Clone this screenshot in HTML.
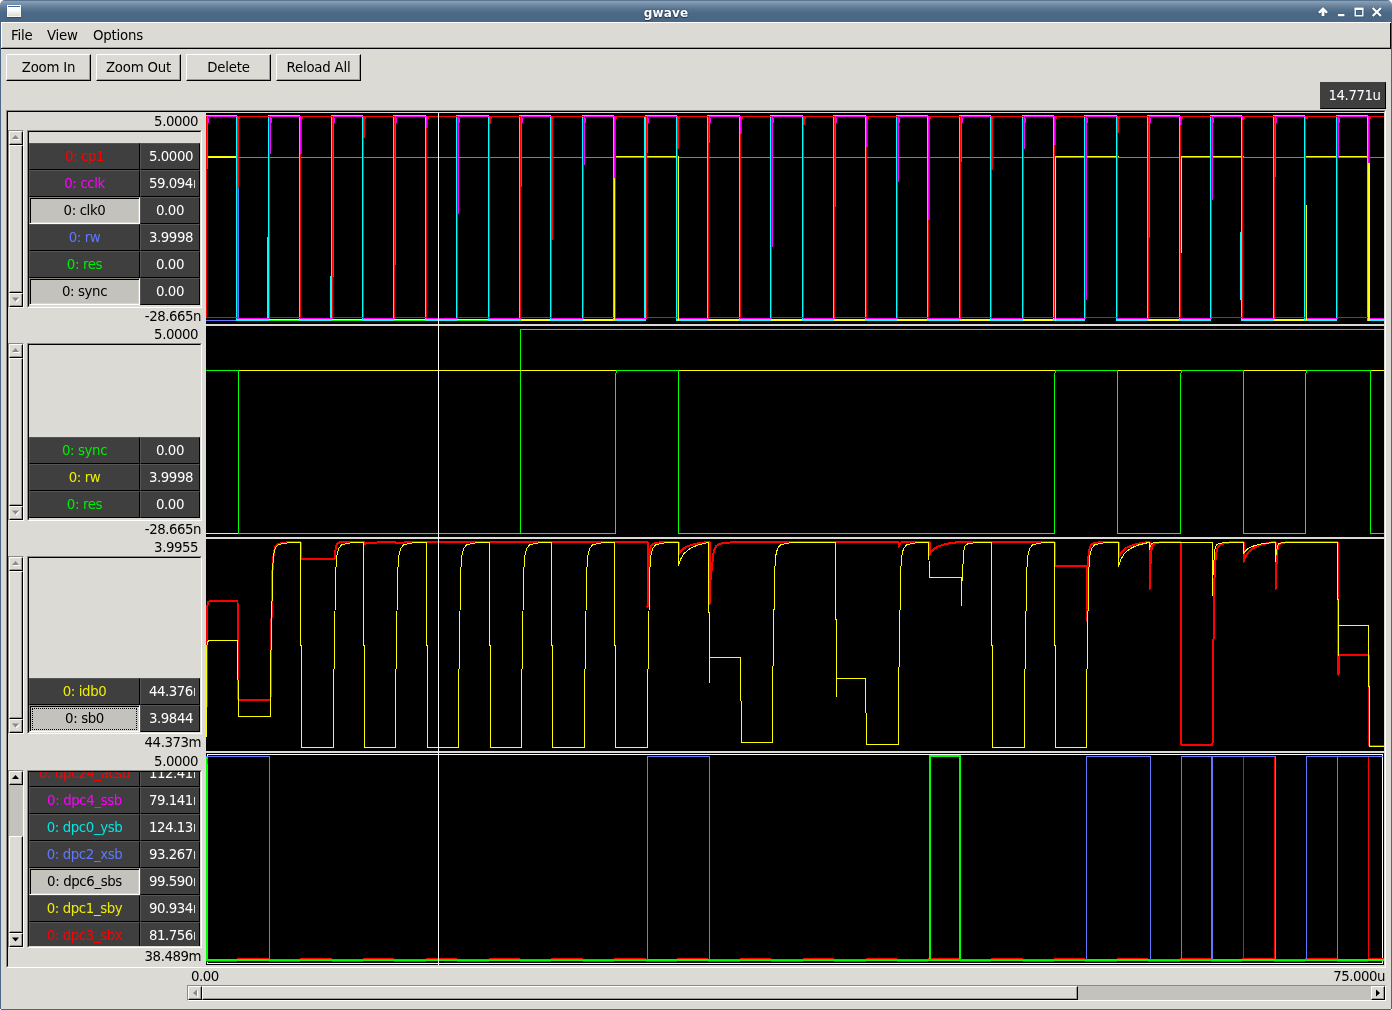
<!DOCTYPE html><html><head><meta charset="utf-8"><title>gwave</title><style>
*{box-sizing:border-box;margin:0;padding:0}
html,body{width:1392px;height:1010px;overflow:hidden;background:#dcdad5}
body{position:relative;font-family:"DejaVu Sans","Liberation Sans",sans-serif;font-size:13.33px;letter-spacing:-0.22px;color:#000}
.a{position:absolute}
.t{position:absolute;white-space:nowrap;line-height:16px;height:16px}
#root{position:absolute;left:0;top:0;width:1392px;height:1010px;will-change:transform}
#tb{left:0;top:0;width:1392px;height:22px;background:linear-gradient(#587592 0px,#587592 1px,#8ba1b7 1px,#7189a3 5px,#58758f 9px,#4b6987 13px,#4a6886 22px);border-radius:5px 5px 0 0}
#title{left:0;width:1332px;top:5px;text-align:center;color:#fff;font-weight:bold;font-size:12px;letter-spacing:0.15px;line-height:16px;height:16px;text-shadow:0 1px 1px rgba(20,35,55,.7),0 0 2px rgba(20,35,55,.6)}
.btn{position:absolute;background:#dcdad5;border:1px solid;border-color:#fff #000 #000 #fff;box-shadow:inset -1px -1px 0 #9b9a96;text-align:center;line-height:26px}
.db{position:absolute;background:#3f3f3f;height:27px;border:1px solid;border-color:#555 #000 #000 #555;text-align:center;line-height:26px;color:#fff;white-space:nowrap;overflow:hidden;letter-spacing:-0.38px}
.sel{background:#c4c2bd;color:#000;border-color:#8b8a80 #fff #fff #8b8a80;box-shadow:inset 1px 1px 0 #000,inset -1px -1px 0 #d6d4cf}
.lb{position:absolute;border:1px solid;border-color:#8b8a86 #fff #fff #8b8a86;overflow:hidden}
.lb i{pointer-events:none;position:absolute;left:0;top:0;right:0;bottom:0;border:1px solid;border-color:#000 #dcdad5 #dcdad5 #000}
.sb{position:absolute;background:#c4c2bd;border:1px solid;border-color:#8b8a86 #fff #fff #8b8a86}
.st{position:absolute;background:#dcdad5;border:1px solid;border-color:#fff #000 #000 #fff;box-shadow:inset -1px -1px 0 #9b9a96}
.vc,.val,.num{letter-spacing:-0.46px}
.vc{position:absolute;left:7px;top:0;width:46px;height:25px;overflow:hidden}
.val{position:absolute;text-align:right;white-space:nowrap;line-height:16px;height:16px}
</style></head><body><div id="root">
<div class="a" style="left:0;top:0;width:1392px;height:1010px;background:#4a6886"></div>
<div class="a" style="left:0;top:0;width:6px;height:6px;background:#fff"></div>
<div class="a" style="right:0;top:0;width:6px;height:6px;background:#fff"></div>
<div class="a" id="tb"></div>
<div class="a" style="left:1px;top:22px;width:1390px;height:987px;background:#dcdad5"></div>
<div class="a" style="left:1px;top:22px;width:1390px;height:1px;background:#fff"></div>
<div class="a" style="left:1px;top:22px;width:1px;height:26px;background:#fff"></div>
<div class="a" style="left:1391px;top:1009px;width:1px;height:1px;background:#fff"></div>
<div class="a" style="left:0;top:1009px;width:1px;height:1px;background:#fff"></div>
<div class="a" style="left:7px;top:5px;width:14px;height:12px;background:linear-gradient(#4468ae 0,#4468ae 1px,#fff 1px,#fdfdfb 4px,#deded6 10px);border:1px solid #f6f6f2;border-top-color:#fff;box-shadow:0 1px 1px rgba(40,60,90,.6)"></div>
<div class="a t" id="title">gwave</div>
<svg class="a" style="left:1310px;top:0" width="80" height="22" viewBox="1310 0 80 22"><g fill="none" stroke="#3c5772" transform="translate(0,0.3)" style="stroke-width:1" opacity="0.9"><path d="M1323 10V16" stroke-width="4.4" stroke-linecap="butt"/><path d="M1319.6 12.1L1323 8.7l3.4 3.4" stroke-width="4" stroke-linecap="round" stroke-linejoin="miter"/><path d="M1338 15.1h6.4" stroke-width="3.9"/><path d="M1355.2 9.2h7.6v6.6h-7.6z" stroke-width="3"/><path d="M1354.5 8.5h9" stroke-width="3.6"/><path d="M1372.7 7.9l8.2 8.2M1380.9 7.9l-8.2 8.2" stroke-width="3.7" stroke-linecap="butt"/></g><g fill="none" stroke="#fff"><path d="M1323 10V16" stroke-width="2.8" stroke-linecap="butt"/><path d="M1319.6 12.1L1323 8.7l3.4 3.4" stroke-width="2.4" stroke-linecap="round" stroke-linejoin="miter"/><path d="M1338 15.1h6.4" stroke-width="2.3"/><path d="M1355.2 9.2h7.6v6.6h-7.6z" stroke-width="1.4"/><path d="M1354.5 8.5h9" stroke-width="2"/><path d="M1372.7 7.9l8.2 8.2M1380.9 7.9l-8.2 8.2" stroke-width="2.1" stroke-linecap="butt"/></g></svg>
<div class="a" style="left:2px;top:47px;width:1388px;height:1px;background:#9b9a96"></div>
<div class="a" style="left:1px;top:48px;width:1390px;height:1px;background:#000"></div>
<div class="a" style="left:1390px;top:23px;width:1px;height:26px;background:#000"></div>
<div class="t" style="left:11px;top:28px">File</div>
<div class="t" style="left:47px;top:28px">View</div>
<div class="t" style="left:93px;top:28px">Options</div>
<div class="btn" style="left:6px;top:54px;width:85px;height:27px">Zoom In</div>
<div class="btn" style="left:96px;top:54px;width:85px;height:27px">Zoom Out</div>
<div class="btn" style="left:186px;top:54px;width:85px;height:27px">Delete</div>
<div class="btn" style="left:276px;top:54px;width:85px;height:27px">Reload All</div>
<div class="a" style="left:1320px;top:82px;width:66px;height:27px;padding-left:3px;background:#3f3f3f;border:1px solid;border-color:#3f3f3f #000 #000 #3f3f3f;color:#fff;text-align:center;line-height:25px;letter-spacing:-0.46px">14.771u</div>
<div class="a" style="left:6px;top:110px;width:1380px;height:858px;border:1px solid;border-color:#8b8a86 #fff #fff #8b8a86"></div>
<div class="a" style="left:7px;top:111px;width:1378px;height:856px;border:1px solid;border-color:#000 #dcdad5 #dcdad5 #000"></div>
<div class="val" style="left:100px;width:98px;top:114px">5.0000</div>
<div class="val" style="left:100px;width:101px;top:309px">-28.665n</div>
<div class="sb" style="left:8px;top:130px;width:16px;height:178px"></div>
<div class="st" style="left:9px;top:131px;width:14px;height:14px"></div>
<div class="st" style="left:9px;top:293px;width:14px;height:14px"></div>
<svg class="a" style="left:9px;top:131px" width="14" height="14"><path d="M4 9h7L7.5 5z" fill="#fff"/><path d="M3 8h7L6.5 4z" fill="#8b8a86"/></svg>
<svg class="a" style="left:9px;top:293px" width="14" height="14"><path d="M4 5.5h7L7.5 9.5z" fill="#fff"/><path d="M3 4.5h7L6.5 8.5z" fill="#8b8a86"/></svg>
<div class="st" style="left:9px;top:145px;width:14px;height:148px"></div>
<div class="lb" style="left:27px;top:130px;width:175px;height:178px">
<div class="db" style="left:1px;top:12px;width:111px;color:#ff0000">0: cp1</div>
<div class="db" style="left:112px;top:12px;width:60px"><span class="vc" style="text-align:center">5.0000</span></div>
<div class="db" style="left:1px;top:39px;width:111px;color:#ff00ff">0: cclk</div>
<div class="db" style="left:112px;top:39px;width:60px"><span class="vc" style="text-align:left;left:8px">59.094m</span></div>
<div class="db sel" style="left:1px;top:66px;width:111px">0: clk0</div>
<div class="db" style="left:112px;top:66px;width:60px"><span class="vc" style="text-align:center;left:6px">0.00</span></div>
<div class="db" style="left:1px;top:93px;width:111px;color:#5f78ff">0: rw</div>
<div class="db" style="left:112px;top:93px;width:60px"><span class="vc" style="text-align:center">3.9998</span></div>
<div class="db" style="left:1px;top:120px;width:111px;color:#00ee00">0: res</div>
<div class="db" style="left:112px;top:120px;width:60px"><span class="vc" style="text-align:center;left:6px">0.00</span></div>
<div class="db sel" style="left:1px;top:147px;width:111px">0: sync</div>
<div class="db" style="left:112px;top:147px;width:60px"><span class="vc" style="text-align:center;left:6px">0.00</span></div>
<i></i></div>
<div class="val" style="left:100px;width:98px;top:327px">5.0000</div>
<div class="val" style="left:100px;width:101px;top:522px">-28.665n</div>
<div class="sb" style="left:8px;top:343px;width:16px;height:178px"></div>
<div class="st" style="left:9px;top:344px;width:14px;height:14px"></div>
<div class="st" style="left:9px;top:506px;width:14px;height:14px"></div>
<svg class="a" style="left:9px;top:344px" width="14" height="14"><path d="M4 9h7L7.5 5z" fill="#fff"/><path d="M3 8h7L6.5 4z" fill="#8b8a86"/></svg>
<svg class="a" style="left:9px;top:506px" width="14" height="14"><path d="M4 5.5h7L7.5 9.5z" fill="#fff"/><path d="M3 4.5h7L6.5 8.5z" fill="#8b8a86"/></svg>
<div class="st" style="left:9px;top:358px;width:14px;height:148px"></div>
<div class="lb" style="left:27px;top:343px;width:175px;height:178px">
<div class="db" style="left:1px;top:93px;width:111px;color:#00ee00">0: sync</div>
<div class="db" style="left:112px;top:93px;width:60px"><span class="vc" style="text-align:center;left:6px">0.00</span></div>
<div class="db" style="left:1px;top:120px;width:111px;color:#eeee00">0: rw</div>
<div class="db" style="left:112px;top:120px;width:60px"><span class="vc" style="text-align:center">3.9998</span></div>
<div class="db" style="left:1px;top:147px;width:111px;color:#00ee00">0: res</div>
<div class="db" style="left:112px;top:147px;width:60px"><span class="vc" style="text-align:center;left:6px">0.00</span></div>
<i></i></div>
<div class="val" style="left:100px;width:98px;top:540px">3.9955</div>
<div class="val" style="left:100px;width:101px;top:735px">44.373m</div>
<div class="sb" style="left:8px;top:556px;width:16px;height:178px"></div>
<div class="st" style="left:9px;top:557px;width:14px;height:14px"></div>
<div class="st" style="left:9px;top:719px;width:14px;height:14px"></div>
<svg class="a" style="left:9px;top:557px" width="14" height="14"><path d="M4 9h7L7.5 5z" fill="#fff"/><path d="M3 8h7L6.5 4z" fill="#8b8a86"/></svg>
<svg class="a" style="left:9px;top:719px" width="14" height="14"><path d="M4 5.5h7L7.5 9.5z" fill="#fff"/><path d="M3 4.5h7L6.5 8.5z" fill="#8b8a86"/></svg>
<div class="st" style="left:9px;top:571px;width:14px;height:148px"></div>
<div class="lb" style="left:27px;top:556px;width:175px;height:178px">
<div class="db" style="left:1px;top:121px;width:111px;color:#eeee00">0: idb0</div>
<div class="db" style="left:112px;top:121px;width:60px"><span class="vc" style="text-align:left;left:8px">44.376m</span></div>
<div class="db sel" style="left:1px;top:148px;width:111px">0: sb0</div>
<div class="a" style="left:4px;top:151px;width:105px;height:22px;border:1px dotted #000"></div>
<div class="db" style="left:112px;top:148px;width:60px"><span class="vc" style="text-align:center">3.9844</span></div>
<i></i></div>
<div class="val" style="left:100px;width:98px;top:754px">5.0000</div>
<div class="val" style="left:100px;width:101px;top:949px">38.489m</div>
<div class="sb" style="left:8px;top:770px;width:16px;height:178px"></div>
<div class="st" style="left:9px;top:771px;width:14px;height:14px"></div>
<div class="st" style="left:9px;top:933px;width:14px;height:14px"></div>
<svg class="a" style="left:9px;top:771px" width="14" height="14"><path d="M3 8h7L6.5 4z" fill="#000"/></svg>
<svg class="a" style="left:9px;top:933px" width="14" height="14"><path d="M3 4.5h7L6.5 8.5z" fill="#000"/></svg>
<div class="st" style="left:9px;top:836px;width:14px;height:97px"></div>
<div class="lb" style="left:27px;top:770px;width:175px;height:178px">
<div class="db" style="left:1px;top:-11px;width:111px;color:#ff0000">0: dpc24_acsb</div>
<div class="db" style="left:112px;top:-11px;width:60px"><span class="vc" style="text-align:left;left:8px">112.41m</span></div>
<div class="db" style="left:1px;top:16px;width:111px;color:#ff00ff">0: dpc4_ssb</div>
<div class="db" style="left:112px;top:16px;width:60px"><span class="vc" style="text-align:left;left:8px">79.141m</span></div>
<div class="db" style="left:1px;top:43px;width:111px;color:#00e5e5">0: dpc0_ysb</div>
<div class="db" style="left:112px;top:43px;width:60px"><span class="vc" style="text-align:left;left:8px">124.13m</span></div>
<div class="db" style="left:1px;top:70px;width:111px;color:#5f78ff">0: dpc2_xsb</div>
<div class="db" style="left:112px;top:70px;width:60px"><span class="vc" style="text-align:left;left:8px">93.267m</span></div>
<div class="db sel" style="left:1px;top:97px;width:111px">0: dpc6_sbs</div>
<div class="db" style="left:112px;top:97px;width:60px"><span class="vc" style="text-align:left;left:8px">99.590m</span></div>
<div class="db" style="left:1px;top:124px;width:111px;color:#eeee00">0: dpc1_sby</div>
<div class="db" style="left:112px;top:124px;width:60px"><span class="vc" style="text-align:left;left:8px">90.934m</span></div>
<div class="db" style="left:1px;top:151px;width:111px;color:#ff0000">0: dpc3_sbx</div>
<div class="db" style="left:112px;top:151px;width:60px"><span class="vc" style="text-align:left;left:8px">81.756m</span></div>
<i></i></div>
<svg class="a" style="left:206px;top:113px" width="1178" height="852" viewBox="206 113 1178 852" shape-rendering="crispEdges">
<path fill="#000" d="M206 113h1178v211h-1178zM206 326h1178v211h-1178zM206 539h1178v212h-1178zM206 753h1178v212h-1178z"/>
<path fill="#ffff00" d="M206 156h33v2h-33zM238 319h376v2h-376zM614 156h65v2h-65zM678 319h376v2h-376zM1054 156h65v2h-65zM1118 319h62v2h-62zM1180 156h64v2h-64zM1243 319h62v2h-62zM1305 156h65v2h-65zM1369 319h15v2h-15z"/><path fill="#00ff00" d="M206 320h314v1h-314zM520 116h1v205h-1zM520 116h864v1h-864z"/><path fill="#6478ff" d="M206 320h32v1h-32zM238 157h1v164h-1zM237 157h1147v1h-1147z"/><path fill="#00ffff" d="M206 115h31v2h-31zM236 115h1v206h-1zM236 319h33v2h-33zM268 115h1v206h-1zM268 115h32v2h-32zM299 115h1v206h-1zM299 319h33v2h-33zM331 115h1v206h-1zM331 115h32v2h-32zM362 115h1v206h-1zM362 319h32v2h-32zM393 115h1v206h-1zM393 115h33v2h-33zM425 115h1v206h-1zM425 319h32v2h-32zM456 115h1v206h-1zM456 115h33v2h-33zM488 115h1v206h-1zM488 319h32v2h-32zM519 115h1v206h-1zM519 115h32v2h-32zM550 115h1v206h-1zM550 319h33v2h-33zM582 115h1v206h-1zM582 115h32v2h-32zM613 115h1v206h-1zM613 319h33v2h-33zM645 115h1v206h-1zM645 115h32v2h-32zM676 115h1v206h-1zM676 319h32v2h-32zM707 115h1v206h-1zM707 115h33v2h-33zM739 115h1v206h-1zM739 319h32v2h-32zM770 115h1v206h-1zM770 115h33v2h-33zM802 115h1v206h-1zM802 319h32v2h-32zM833 115h1v206h-1zM833 115h33v2h-33zM865 115h1v206h-1zM865 319h32v2h-32zM896 115h1v206h-1zM896 115h32v2h-32zM927 115h1v206h-1zM927 319h33v2h-33zM959 115h1v206h-1zM959 115h32v2h-32zM990 115h1v206h-1zM990 319h33v2h-33zM1022 115h1v206h-1zM1022 115h32v2h-32zM1053 115h1v206h-1zM1053 319h32v2h-32zM1084 115h1v206h-1zM1084 115h33v2h-33zM1116 115h1v206h-1zM1116 319h32v2h-32zM1147 115h1v206h-1zM1147 115h33v2h-33zM1179 115h1v206h-1zM1179 319h32v2h-32zM1210 115h1v206h-1zM1210 115h32v2h-32zM1241 115h1v206h-1zM1241 319h33v2h-33zM1273 115h1v206h-1zM1273 115h32v2h-32zM1304 115h1v206h-1zM1304 319h33v2h-33zM1336 115h1v206h-1zM1336 115h32v2h-32zM1367 115h1v206h-1zM1367 319h17v2h-17zM267 237h1v83h-1zM330 276h1v44h-1zM644 116h1v204h-1zM1240 232h1v68h-1z"/><path fill="#ff00ff" d="M207 116h1v53h-1zM208 118h1v5h-1zM207 116h31v1h-31zM237 116h1v72h-1zM237 318h33v1h-33zM270 116h1v38h-1zM271 118h1v5h-1zM270 116h31v1h-31zM300 116h1v38h-1zM300 318h33v1h-33zM333 116h1v161h-1zM334 118h1v5h-1zM333 116h31v1h-31zM363 116h1v22h-1zM363 318h32v1h-32zM395 116h1v149h-1zM396 118h1v5h-1zM395 116h32v1h-32zM426 116h1v12h-1zM426 318h32v1h-32zM458 116h1v98h-1zM459 118h1v5h-1zM458 116h32v1h-32zM489 116h1v8h-1zM489 318h32v1h-32zM521 116h1v71h-1zM522 118h1v5h-1zM521 116h31v1h-31zM551 116h1v124h-1zM551 318h33v1h-33zM584 116h1v49h-1zM585 118h1v5h-1zM584 116h31v1h-31zM614 116h1v62h-1zM614 318h33v1h-33zM647 116h1v37h-1zM648 118h1v5h-1zM647 116h31v1h-31zM677 116h1v33h-1zM677 318h32v1h-32zM709 116h1v27h-1zM710 118h1v5h-1zM709 116h32v1h-32zM740 116h1v18h-1zM740 318h32v1h-32zM772 116h1v131h-1zM773 118h1v5h-1zM772 116h32v1h-32zM803 116h1v9h-1zM803 318h32v1h-32zM835 116h1v91h-1zM836 118h1v5h-1zM835 116h32v1h-32zM866 116h1v31h-1zM866 318h32v1h-32zM898 116h1v66h-1zM899 118h1v5h-1zM898 116h31v1h-31zM928 116h1v104h-1zM928 318h33v1h-33zM961 116h1v46h-1zM962 118h1v5h-1zM961 116h31v1h-31zM991 116h1v54h-1zM991 318h33v1h-33zM1024 116h1v33h-1zM1025 118h1v5h-1zM1024 116h31v1h-31zM1054 116h1v29h-1zM1054 318h32v1h-32zM1086 116h1v184h-1zM1087 118h1v5h-1zM1086 116h32v1h-32zM1117 116h1v17h-1zM1117 318h32v1h-32zM1149 116h1v122h-1zM1150 118h1v5h-1zM1149 116h32v1h-32zM1180 116h1v9h-1zM1180 318h32v1h-32zM1212 116h1v84h-1zM1213 118h1v5h-1zM1212 116h31v1h-31zM1242 116h1v4h-1zM1242 318h33v1h-33zM1275 116h1v61h-1zM1276 118h1v5h-1zM1275 116h31v1h-31zM1305 116h1v3h-1zM1305 318h33v1h-33zM1338 116h1v42h-1zM1339 118h1v5h-1zM1338 116h31v1h-31zM1368 116h1v47h-1zM1368 318h16v1h-16z"/><path fill="#ff0000" d="M206 116h1v202h-1zM206 317h32v1h-32zM238 116h1v72h-1zM237 188h1v130h-1zM239 116h1v3h-1zM239 116h31v1h-31zM269 116h1v202h-1zM269 317h32v1h-32zM301 116h1v38h-1zM300 154h1v164h-1zM302 116h1v3h-1zM302 116h31v1h-31zM332 116h1v202h-1zM332 317h32v1h-32zM364 116h1v22h-1zM363 138h1v180h-1zM365 116h1v3h-1zM365 116h30v1h-30zM394 116h1v202h-1zM394 317h33v1h-33zM427 116h1v12h-1zM426 128h1v190h-1zM428 116h1v3h-1zM428 116h30v1h-30zM457 116h1v202h-1zM457 317h33v1h-33zM490 116h1v8h-1zM489 124h1v194h-1zM491 116h1v3h-1zM491 116h30v1h-30zM520 116h1v202h-1zM520 317h32v1h-32zM552 116h1v124h-1zM551 240h1v78h-1zM553 116h1v3h-1zM553 116h31v1h-31zM583 116h1v202h-1zM583 317h32v1h-32zM615 116h1v202h-1zM616 116h1v3h-1zM616 116h31v1h-31zM646 116h1v202h-1zM646 317h32v1h-32zM678 116h1v33h-1zM677 149h1v169h-1zM679 116h1v3h-1zM679 116h30v1h-30zM708 116h1v202h-1zM708 317h33v1h-33zM741 116h1v18h-1zM740 134h1v184h-1zM742 116h1v3h-1zM742 116h30v1h-30zM771 116h1v202h-1zM771 317h33v1h-33zM804 116h1v9h-1zM803 125h1v193h-1zM805 116h1v3h-1zM805 116h30v1h-30zM834 116h1v202h-1zM834 317h33v1h-33zM867 116h1v31h-1zM866 147h1v171h-1zM868 116h1v3h-1zM868 116h30v1h-30zM897 116h1v202h-1zM897 317h32v1h-32zM929 116h1v104h-1zM928 220h1v98h-1zM930 116h1v3h-1zM930 116h31v1h-31zM960 116h1v202h-1zM960 317h32v1h-32zM992 116h1v54h-1zM991 170h1v148h-1zM993 116h1v3h-1zM993 116h31v1h-31zM1023 116h1v202h-1zM1023 317h32v1h-32zM1055 116h1v29h-1zM1054 145h1v173h-1zM1056 116h1v3h-1zM1056 116h30v1h-30zM1085 116h1v202h-1zM1085 317h33v1h-33zM1118 116h1v17h-1zM1117 133h1v185h-1zM1119 116h1v3h-1zM1119 116h30v1h-30zM1148 116h1v202h-1zM1148 317h33v1h-33zM1181 116h1v9h-1zM1180 125h1v193h-1zM1182 116h1v3h-1zM1182 116h30v1h-30zM1211 116h1v202h-1zM1211 317h32v1h-32zM1243 116h1v4h-1zM1242 120h1v198h-1zM1244 116h1v3h-1zM1244 116h31v1h-31zM1274 116h1v202h-1zM1274 317h32v1h-32zM1306 116h1v3h-1zM1305 119h1v199h-1zM1307 116h1v3h-1zM1307 116h31v1h-31zM1337 116h1v202h-1zM1337 317h32v1h-32zM1369 116h1v202h-1zM1370 116h1v3h-1zM1370 116h15v1h-15z"/><path fill="#ffff00" d="M614 178h1v143h-1zM678 157h1v164h-1zM1055 157h1v164h-1zM1181 157h1v96h-1zM1306 205h1v116h-1zM1368 163h2v158h-2z"/>
<path fill="#00ff00" d="M206 533h314v1h-314zM520 329h1v205h-1zM520 329h864v1h-864z"/><path fill="#ffff00" d="M206 533h32v1h-32zM238 370h1146v1h-1146z"/><path fill="#00ff00" d="M206 370h32v1h-32zM238 370h1v164h-1zM238 533h378v1h-378zM615 373h1v161h-1zM616 370h1v3h-1zM616 370h63v1h-63zM678 370h1v164h-1zM678 533h377v1h-377zM1054 373h1v161h-1zM1055 370h1v3h-1zM1055 370h63v1h-63zM1117 370h1v164h-1zM1117 533h64v1h-64zM1180 373h1v161h-1zM1181 370h1v3h-1zM1181 370h63v1h-63zM1243 370h1v164h-1zM1243 533h63v1h-63zM1305 373h1v161h-1zM1306 370h1v3h-1zM1306 370h65v1h-65zM1370 370h1v164h-1zM1370 533h14v1h-14z"/>
<polyline fill="none" stroke="#ff0000" stroke-width="2" stroke-linejoin="round" points="207.0,707.0 207.0,608.0 208.0,602.0 210.0,601.0 237.5,601.0 238.5,700.0 270.5,700.0 270.5,700.0 271.0,640.0 271.8,605.2 272.5,570.4 273.0,561.0 274.0,551.5 275.5,546.7 278.5,543.9 284.5,542.6 292.5,542.0 300.5,542.0 301.5,559.0 334.5,559.0 334.5,559.0 335.0,552.5 335.8,548.8 336.5,545.1 337.0,544.0 338.0,543.0 339.5,542.5 342.5,542.2 348.5,542.1 356.5,542.0 364.5,542.0 364.5,544.0 366.5,543.4 369.5,543.0 373.5,542.7 378.5,542.4 384.5,542.2 390.5,542.1 394.5,542.0 395.5,542.0 395.5,543.5 397.5,543.1 400.5,542.8 404.5,542.5 409.5,542.3 415.5,542.1 421.5,542.1 425.5,542.0 647.5,542.0 647.5,607.0 648.0,582.3 648.8,568.0 649.5,553.7 650.0,549.8 651.0,545.9 652.5,544.0 655.5,542.8 661.5,542.3 669.5,542.0 678.5,542.0 678.5,555.0 680.5,551.4 683.5,548.5 687.5,546.3 692.5,544.6 698.5,543.3 704.5,542.5 708.5,542.0 709.5,542.0 709.5,604.0 710.5,580.4 712.0,566.8 713.5,553.2 714.5,549.4 716.5,545.7 719.5,543.9 725.5,542.7 737.5,542.2 898.5,542.2 898.5,547.0 899.0,545.1 899.8,544.0 900.5,542.9 901.0,542.6 902.0,542.3 903.5,542.1 906.5,542.1 912.5,542.0 920.5,542.0 929.5,542.0 929.5,555.0 931.5,551.4 934.5,548.5 938.5,546.3 943.5,544.6 949.5,543.3 955.5,542.5 959.5,542.0 1054.5,542.0 1055.5,566.0 1086.5,566.0 1086.5,621.0 1087.0,591.0 1087.8,573.6 1088.5,556.2 1089.0,551.5 1090.0,546.7 1091.5,544.4 1094.5,542.9 1100.5,542.3 1108.5,542.0 1118.5,542.0 1118.5,558.0 1120.5,553.5 1123.5,550.0 1127.5,547.3 1132.5,545.2 1138.5,543.6 1144.5,542.6 1148.5,542.0 1149.5,542.0 1149.5,589.0 1150.0,571.1 1150.8,560.8 1151.5,550.5 1152.0,547.6 1153.0,544.8 1154.5,543.4 1157.5,542.6 1163.5,542.2 1171.5,542.0 1180.5,542.0 1181.5,745.0 1212.5,745.0 1212.5,745.0 1213.0,667.9 1213.8,623.2 1214.5,578.5 1215.0,566.4 1216.0,554.2 1217.5,548.1 1220.5,544.4 1226.5,542.8 1234.5,542.0 1243.5,542.0 1243.5,562.0 1245.5,556.4 1248.5,552.0 1252.5,548.6 1257.5,546.0 1263.5,544.0 1269.5,542.8 1273.5,542.0 1275.5,542.0 1275.5,589.0 1276.0,571.1 1276.8,560.8 1277.5,550.5 1278.0,547.6 1279.0,544.8 1280.5,543.4 1283.5,542.6 1289.5,542.2 1297.5,542.0 1337.5,542.0 1338.5,675.0 1339.0,655.0 1340.5,655.0 1368.5,655.0 1369.5,746.0 1384.0,746.0"/>
<polyline fill="none" stroke="#ffff00" stroke-width="1" stroke-linejoin="round" points="206.5,737.0 206.5,648.0 207.5,642.0 209.0,640.5 237.5,640.5 238.5,716.5 270.5,716.5 270.5,716.5 271.0,650.4 271.8,612.1 272.5,573.8 273.0,563.4 274.0,552.9 275.5,547.7 278.5,544.6 284.5,543.2 292.5,542.5 300.5,542.5 301.5,747.5 333.5,747.5 333.5,747.5 334.0,669.6 334.8,624.5 335.5,579.4 336.0,567.1 337.0,554.8 338.5,548.6 341.5,545.0 347.5,543.3 355.5,542.5 363.5,542.5 364.5,747.5 395.5,747.5 395.5,747.5 396.0,669.6 396.8,624.5 397.5,579.4 398.0,567.1 399.0,554.8 400.5,548.6 403.5,545.0 409.5,543.3 417.5,542.5 426.5,542.5 427.5,747.5 458.5,747.5 458.5,747.5 459.0,669.6 459.8,624.5 460.5,579.4 461.0,567.1 462.0,554.8 463.5,548.6 466.5,545.0 472.5,543.3 480.5,542.5 489.5,542.5 490.5,747.5 521.5,747.5 521.5,747.5 522.0,669.6 522.8,624.5 523.5,579.4 524.0,567.1 525.0,554.8 526.5,548.6 529.5,545.0 535.5,543.3 543.5,542.5 551.5,542.5 552.5,747.5 584.5,747.5 584.5,747.5 585.0,669.6 585.8,624.5 586.5,579.4 587.0,567.1 588.0,554.8 589.5,548.6 592.5,545.0 598.5,543.3 606.5,542.5 614.5,542.5 615.5,747.5 647.5,747.5 647.5,747.5 648.0,669.6 648.8,624.5 649.5,579.4 650.0,567.1 651.0,554.8 652.5,548.6 655.5,545.0 661.5,543.3 669.5,542.5 678.5,542.5 678.5,566.0 680.5,559.4 683.5,554.2 687.5,550.3 692.5,547.2 698.5,544.9 704.5,543.4 708.5,542.5 708.5,542.5 709.5,682.0 710.0,657.5 711.5,657.5 740.5,657.5 741.5,742.5 772.5,742.5 772.5,742.5 773.0,666.5 773.8,622.5 774.5,578.5 775.0,566.5 776.0,554.5 777.5,548.5 780.5,544.9 786.5,543.3 794.5,542.5 835.5,542.5 836.5,696.0 837.0,678.5 838.5,678.5 865.5,678.5 866.5,744.5 898.5,744.5 898.5,744.5 899.0,667.7 899.8,623.3 900.5,578.9 901.0,566.7 902.0,554.6 903.5,548.6 906.5,544.9 912.5,543.3 920.5,542.5 928.5,542.5 929.5,577.5 961.5,577.5 961.5,606.0 962.0,581.9 962.8,567.9 963.5,553.9 964.0,550.1 965.0,546.3 966.5,544.4 969.5,543.3 975.5,542.8 983.5,542.5 991.5,542.5 992.5,747.5 1024.5,747.5 1024.5,747.5 1025.0,669.6 1025.8,624.5 1026.5,579.4 1027.0,567.1 1028.0,554.8 1029.5,548.6 1032.5,545.0 1038.5,543.3 1046.5,542.5 1054.5,542.5 1055.5,747.5 1086.5,747.5 1086.5,747.5 1087.0,669.6 1087.8,624.5 1088.5,579.4 1089.0,567.1 1090.0,554.8 1091.5,548.6 1094.5,545.0 1100.5,543.3 1108.5,542.5 1118.5,542.5 1118.5,567.0 1120.5,560.1 1123.5,554.8 1127.5,550.6 1132.5,547.4 1138.5,545.0 1144.5,543.5 1148.5,542.5 1149.5,542.5 1149.5,550.0 1150.0,547.1 1150.8,545.5 1151.5,543.9 1152.0,543.4 1153.0,543.0 1154.5,542.7 1157.5,542.6 1163.5,542.5 1171.5,542.5 1212.5,542.5 1212.5,596.0 1213.0,575.7 1213.8,563.9 1214.5,552.1 1215.0,548.9 1216.0,545.7 1217.5,544.1 1220.5,543.1 1226.5,542.7 1234.5,542.5 1243.5,542.5 1243.5,554.0 1245.5,550.8 1248.5,548.2 1252.5,546.3 1257.5,544.8 1263.5,543.6 1269.5,543.0 1273.5,542.5 1275.5,542.5 1275.5,562.0 1276.0,554.6 1276.8,550.3 1277.5,546.0 1278.0,544.8 1279.0,543.7 1280.5,543.1 1283.5,542.7 1289.5,542.6 1297.5,542.5 1337.5,542.5 1338.5,655.0 1339.0,625.5 1340.5,625.5 1368.5,625.5 1369.5,746.5 1384.0,746.5"/>
<path fill="#fff" d="M207 754h1176v1h-1176zM207 963h1176v1h-1176zM207 754h1v210h-1zM1382 754h1v210h-1z"/><path fill="#ff0000" d="M206 961h31v1h-31zM237 958h32v1h-32zM269 961h31v1h-31zM300 958h32v1h-32zM332 961h31v1h-31zM363 958h31v1h-31zM394 961h32v1h-32zM426 958h31v1h-31zM457 961h32v1h-32zM489 958h31v1h-31zM520 961h31v1h-31zM551 958h32v1h-32zM583 961h31v1h-31zM614 958h32v1h-32zM646 961h31v1h-31zM677 958h31v1h-31zM708 961h32v1h-32zM740 958h31v1h-31zM771 961h32v1h-32zM803 958h31v1h-31zM834 961h32v1h-32zM866 958h31v1h-31zM897 961h31v1h-31zM928 958h32v1h-32zM960 961h31v1h-31zM991 958h32v1h-32zM1023 961h31v1h-31zM1054 958h31v1h-31zM1085 961h32v1h-32zM1117 958h31v1h-31zM1148 961h32v1h-32zM1180 958h31v1h-31zM1211 961h31v1h-31zM1242 958h32v1h-32zM1274 961h31v1h-31zM1305 958h32v1h-32zM1337 961h31v1h-31zM1368 958h16v1h-16zM1243 756h1v203h-1zM1243 756h32v1h-32zM1274 756h1v203h-1zM1368 756h1v203h-1zM1368 756h15v1h-15zM1368 958h16v1h-16z"/><path fill="#00ff00" d="M206 757h2v204h-2zM206 959h1178v2h-1178zM929 756h2v205h-2zM929 755h32v2h-32zM959 756h2v205h-2z"/><path fill="#ff00ff" d="M207 759h1v5h-1z"/><path fill="#6478ff" d="M206 756h64v1h-64zM269 756h1v204h-1zM647 756h1v204h-1zM647 756h63v1h-63zM709 756h1v204h-1zM1086 756h1v204h-1zM1086 756h65v1h-65zM1150 756h1v204h-1zM1181 756h1v204h-1zM1181 756h31v1h-31zM1211 756h1v204h-1zM1212 756h1v204h-1zM1212 756h64v1h-64zM1275 756h1v204h-1zM1306 756h1v204h-1zM1306 756h32v1h-32zM1337 756h1v204h-1zM1337 756h1v204h-1zM1337 756h46v1h-46zM269 959h378v1h-378zM709 959h377v1h-377zM1150 959h31v1h-31zM1275 959h31v1h-31zM1181 959h32v1h-32zM1306 959h32v1h-32z"/>
<path fill="#fff" d="M438 113h1v852h-1z"/>
</svg>
<div class="t num" style="left:191px;top:969px">0.00</div>
<div class="val" style="left:1280px;width:105px;top:969px">75.000u</div>
<div class="sb" style="left:187px;top:985px;width:1199px;height:16px"></div>
<div class="st" style="left:188px;top:986px;width:14px;height:14px"></div>
<div class="st" style="left:1371px;top:986px;width:14px;height:14px"></div>
<div class="st" style="left:202px;top:986px;width:876px;height:14px"></div>
<svg class="a" style="left:188px;top:986px" width="14" height="14"><path d="M10 4.5v7L6 8z" fill="#fff"/><path d="M9 3.5v7L5 7z" fill="#8b8a86"/></svg>
<svg class="a" style="left:1371px;top:986px" width="14" height="14"><path d="M5 3.5v7L9 7z" fill="#000"/></svg>
</div></body></html>
